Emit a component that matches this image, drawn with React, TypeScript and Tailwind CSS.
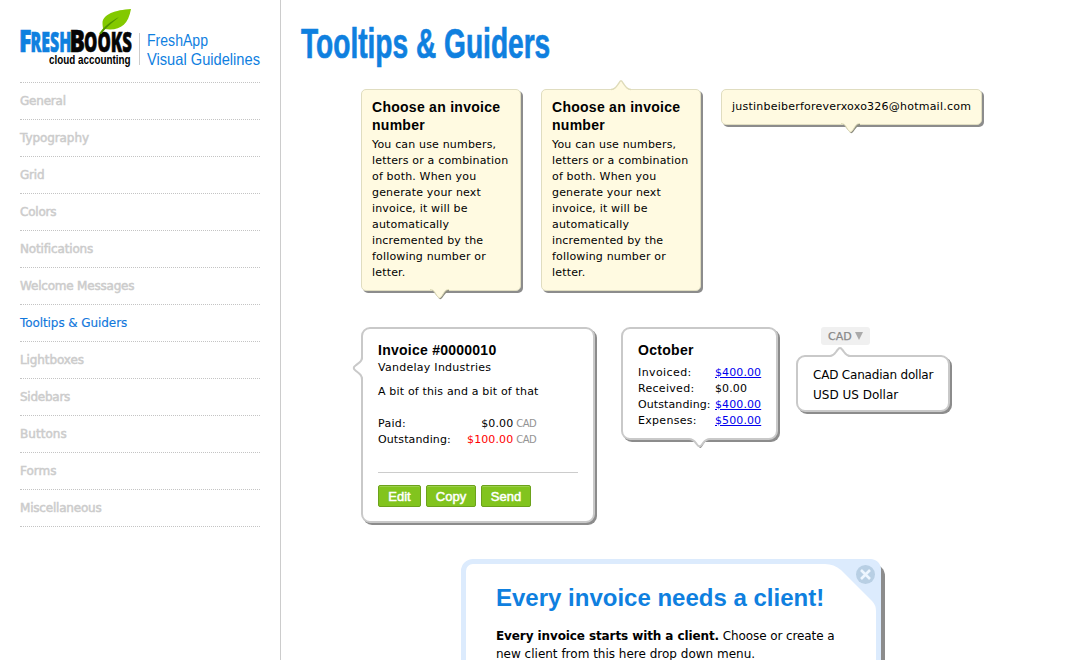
import React from "react";

const verdana = "font-['DejaVu_Sans',Verdana,sans-serif]";
const arial = "font-['Liberation_Sans',Arial,sans-serif]";

const navItems = [
  ["General", "tracking-[-0.2px]"],
  ["Typography", "tracking-[-0.08px]"],
  ["Grid", "tracking-[-0.2px]"],
  ["Colors", "tracking-[-0.2px]"],
  ["Notifications", "tracking-[-0.15px]"],
  ["Welcome Messages", "tracking-[-0.2px]"],
  ["Tooltips & Guiders", "tracking-[-0.08px]"],
  ["Lightboxes", "tracking-[-0.1px]"],
  ["Sidebars", "tracking-[-0.25px]"],
  ["Buttons", "tracking-[0.05px]"],
  ["Forms", "tracking-[0px]"],
  ["Miscellaneous", "tracking-[-0.2px]"],
];

function Logo() {
  return (
    <svg className="block h-[64px] w-[244px] overflow-visible" viewBox="0 0 244 64">
      <g fontFamily="Open Sans, sans-serif" fontWeight="800" strokeWidth="0.6">
        <g fill="#0f80df" stroke="#0f80df">
          <text x="-1" y="43.500" fontSize="29.500" textLength="12.500" lengthAdjust="spacingAndGlyphs">F</text>
          <text x="10.500" y="43.500" fontSize="27.500" textLength="41" lengthAdjust="spacingAndGlyphs">RESH</text>
        </g>
        <g fill="#050505" stroke="#050505">
          <text x="49.500" y="43.500" fontSize="29.500" textLength="15.500" lengthAdjust="spacingAndGlyphs">B</text>
          <text x="64" y="43.500" fontSize="27.500" textLength="48" lengthAdjust="spacingAndGlyphs">OOKS</text>
        </g>
      </g>
      <text x="29" y="56" fontFamily="Liberation Sans, sans-serif" fontWeight="700" fontSize="13.5" textLength="81.500" lengthAdjust="spacingAndGlyphs">cloud accounting</text>
      <path d="M111 1C95 2 83 6 82.500 15C82.500 18 83 20 83 20.500L79 25.500L80.500 26L84.500 21C99 23 108 18 111 1Z" fill="#83c900" />
      <path d="M79.500 26C84 18 90 14 99 9C92 15 86 19 81.500 26Z" fill="#4f9200" />
      <path d="M119.500 25V57" stroke="#ccc" />
      <g fontFamily="Liberation Sans, sans-serif" fontSize="16.500" fill="#0f80df">
        <text x="127" y="37.500" textLength="61" lengthAdjust="spacingAndGlyphs">FreshApp</text>
        <text x="127" y="56.500" textLength="113" lengthAdjust="spacingAndGlyphs">Visual Guidelines</text>
      </g>
    </svg>
  );
}

function YellowDown() {
  return (
    <svg className="absolute -bottom-[11px] left-1/2 -ml-[11px] h-[13px] w-[20px]" viewBox="0 0 20 13">
      <path d="M2 2H19V3.500C16 4 15 6 12.500 9.500Q10.500 12.500 9 10.500Z" fill="#8c8c80" />
      <path d="M0 0H19V1.500C15 1.500 14 5 11.500 8.500Q9.500 11.500 7.500 8.500C5 5 4 1.500 0 1.500Z" fill="#fffae1" />
      <path d="M0 1.500C4 1.500 5 5 7.500 8.500Q9.500 11.500 11.500 8.500C14 5 15 1.500 19 1.500" fill="none" stroke="#dedbb8" strokeWidth="1" />
    </svg>
  );
}

function InvoiceTip({ up = false }: { up?: boolean }) {
  return (
    <div className="relative h-[202px] w-[160px] shrink-0 rounded-[5px] border border-[#e0ddc0] bg-[#fffae1] px-[10px] pt-[8px] whitespace-nowrap shadow-[2px_2px_0_#8c8c8c]">
      <h2 className={`${arial} text-[14px] leading-[18px] font-bold tracking-[0.27px]`}>Choose an invoice<br />number</h2>
      <p className="pt-[3px] text-[11px] leading-4 tracking-[0.17px]">
        You can use numbers,<br />letters or a combination<br />of both. When you<br />generate your next<br />invoice, it will be<br />automatically<br />incremented by the<br />following number or<br />letter.
      </p>
      {up ? (
        <svg className="absolute -top-[11px] left-[69px] h-[12px] w-[20px]" viewBox="0 0 20 12">
          <path d="M0 12V11C4 11 5 8 8 4Q10 0 12 4C15 8 16 11 20 11V12Z" fill="#fffae1" />
          <path d="M0 10.500C4 10.500 5 8 8 4Q10 -.5 12 4C15 8 16 10.500 20 10.500" fill="none" stroke="#dedbb8" strokeWidth="1.300" />
        </svg>
      ) : <YellowDown />}
    </div>
  );
}

function GreenButton({ children, width }: { children: string; width: string }) {
  return (
    <button className={`${arial} ${width} h-[22px] rounded-[2px] border border-[#6ca21b] bg-[#82c41e] text-center text-[13px] leading-[19px] text-white shadow-[inset_0_1px_0_#9bd04b] [-webkit-text-stroke:0.5px_white]`}>{children}</button>
  );
}

const card = "relative shrink-0 rounded-[9px] border-2 border-[#c9c9c9] bg-white pl-[15px] shadow-[2px_2px_0_#8c8c8c] whitespace-nowrap";

function Currency() {
  return <span className="ml-[3px] text-[10px] tracking-[-0.6px] text-[#949494]">CAD</span>;
}

export default function App() {
  return (
    <div className={`${verdana} flex h-[660px] w-[1080px] overflow-hidden bg-white text-black`}>
      <aside className="w-[281px] shrink-0 border-r border-[#ccc] pt-[8px] pl-5">
        <Logo />
        <nav className="mt-[10px] w-[240px] border-t border-dotted border-[#c4c4c4]">
          {navItems.map(([label, tracking]) => (
            <a key={label} className={`block h-[37px] border-b border-dotted border-[#c4c4c4] text-[12px] leading-[36px] ${tracking} ${label === "Tooltips & Guiders" ? "text-[#1278dc] [-webkit-text-stroke:0.15px_#1278dc]" : "text-[#ccc] [-webkit-text-stroke:0.5px_#ccc]"}`}>{label}</a>
          ))}
        </nav>
      </aside>

      <main className="flex grow flex-col">
        <div className="h-[89px] shrink-0 pt-[20px] pl-[20px]">
          <h1 className={`${arial} inline-block origin-left scale-x-[0.669] text-[42px] leading-[48px] font-bold whitespace-nowrap text-[#0f80df] [-webkit-text-stroke:0.7px_#0f80df]`}>Tooltips &amp; Guiders</h1>
        </div>

        <section className="flex h-[238px] shrink-0 items-start gap-5 pl-[80px]">
          <InvoiceTip />
          <InvoiceTip up />
          <div className="relative h-[36px] w-[261px] shrink-0 rounded-[5px] border border-[#e0ddc0] bg-[#fffae1] pt-[9px] pl-[10px] text-[11px] leading-4 tracking-[0.23px] shadow-[2px_2px_0_#8c8c8c]">
            justinbeiberforeverxoxo326@hotmail.com
            <YellowDown />
          </div>
        </section>

        <section className="flex h-[232px] shrink-0 items-start pl-[80px] text-[11px] leading-4">
          <div className={`${card} h-[196px] w-[234px] pt-[12px]`}>
            <svg className="absolute -left-[11px] top-[28px] h-[24px] w-[12px]" viewBox="0 0 12 24">
              <path d="M12 0C10 4 8 5 3 9Q0 11 3 13C8 17 10 18 12 23Z" fill="white" />
              <path d="M10 0C10 4 8 5 3.500 8.500Q0 11 3.500 13.500C8 17 10 18 10 23" fill="none" stroke="#c9c9c9" strokeWidth="2" />
            </svg>
            <h2 className={`${arial} text-[14px] leading-[18px] font-bold tracking-[0.25px]`}>Invoice #0000010</h2>
            <p className="pt-px tracking-[0.27px]">Vandelay Industries</p>
            <p className="pt-2 tracking-[0.17px]">A bit of this and a bit of that</p>
            <div className="flex w-[158px] justify-between pt-4"><span className="tracking-[0.3px]">Paid:</span><span className="tracking-[0.1px]">$0.00<Currency /></span></div>
            <div className="flex w-[158px] justify-between"><span className="tracking-[0.12px]">Outstanding:</span><span className="tracking-[0.1px]"><span className="text-[#f00]">$100.00</span><Currency /></span></div>
            <hr className="mt-[24px] w-[200px] border-[#ccc]" />
            <div className="mt-[12px] flex gap-[5px]">
              <GreenButton width="w-[43px]">Edit</GreenButton>
              <GreenButton width="w-[50px]">Copy</GreenButton>
              <GreenButton width="w-[50px]">Send</GreenButton>
            </div>
          </div>

          <div className={`${card} ml-[26px] h-[113px] w-[157px] pt-[12px]`}>
            <h2 className={`${arial} text-[14px] leading-[18px] font-bold tracking-[0.3px]`}>October</h2>
            <dl className="grid grid-cols-[77px_auto] pt-[6px] tracking-[0.1px]">
              <dt className="tracking-[0.4px]">Invoiced:</dt><dd><a className="text-[#00e] underline">$400.00</a></dd>
              <dt className="tracking-[0.3px]">Received:</dt><dd>$0.00</dd>
              <dt>Outstanding:</dt><dd><a className="text-[#00e] underline">$400.00</a></dd>
              <dt className="tracking-[0.3px]">Expenses:</dt><dd><a className="text-[#00e] underline">$500.00</a></dd>
            </dl>
            <svg className="absolute -bottom-[11px] left-[66px] h-[13px] w-[22px]" viewBox="0 0 22 13">
              <path d="M4 4H21C17 4.500 16 6 14 9Q12 13.500 10 11Z" fill="#8c8c8c" />
              <path d="M0 0H21V3C16 3 15 6 13 8.500Q10.500 12 8 8.500C6 6 5 3 0 3Z" fill="white" />
              <path d="M0 3C5 3 6 6 8 8.500Q10.500 12 13 8.500C15 6 16 3 21 3" fill="none" stroke="#c9c9c9" strokeWidth="2" />
            </svg>
          </div>

          <div className="ml-[18px] flex flex-col">
            <div className="ml-[25px] flex h-[18px] w-[49px] items-center rounded-[3px] bg-[#f0f0f0] pt-px pl-[7px] text-[11px] text-[#888] [-webkit-text-stroke:0.25px_#888]">
              CAD
              <svg className="mb-px ml-[3px] h-[8px] w-[8px]" viewBox="0 0 8 8"><path d="M0 0H8L4 8Z" fill="#aaa" /></svg>
            </div>
            <div className={`${card} mt-[10px] h-[57px] w-[154px] pt-[8px] text-[12px] leading-5 tracking-[-0.2px]`}>
              <svg className="absolute -top-[11px] left-[32px] h-[12px] w-[20px]" viewBox="0 0 20 12">
                <path d="M0 12V11C4 9 5 6 8 3Q10 1 12 3C15 6 16 9 20 12Z" fill="white" />
                <path d="M0 10C4 10 5 7 7.500 4Q10 0 12.500 4C15 7 16 10 20 10" fill="none" stroke="#c9c9c9" strokeWidth="2" />
              </svg>
              <p>CAD Canadian dollar</p>
              <p className="tracking-[0px]">USD US Dollar</p>
            </div>
          </div>
        </section>

        <section className="shrink-0 pl-[180px]">
          <div className="relative h-[180px] w-[420px] rounded-[12px] border-[5px] border-[#dcebfd] bg-white pt-[18px] pl-[30px] whitespace-nowrap shadow-[4px_5px_0_#8c8c8c]">
            <svg className="absolute -top-[5px] -right-[5px] h-[52px] w-[58px]" viewBox="0 0 58 52">
              <path d="M0 0H46Q58 0 58 12V52H53Q53 46 49 42L18 11Q11 5 2 5H0Z" fill="#dcebfd" />
              <circle cx="42.500" cy="15.500" r="9.500" fill="#b8cfe4" />
              <path d="M38 11L47 20M47 11L38 20" stroke="#eef6ff" strokeWidth="2.600" />
            </svg>
            <h2 className={`${arial} text-[24px] leading-[32px] font-bold text-[#0f80df]`}>Every invoice needs a client!</h2>
            <p className="pt-[13px] text-[12px] leading-[18px]"><b className="tracking-[-0.1px]">Every invoice starts with a client.</b><span className="tracking-[-0.1px]"> Choose or create a</span><br />new client from this here drop down menu.</p>
          </div>
        </section>
      </main>
    </div>
  );
}
